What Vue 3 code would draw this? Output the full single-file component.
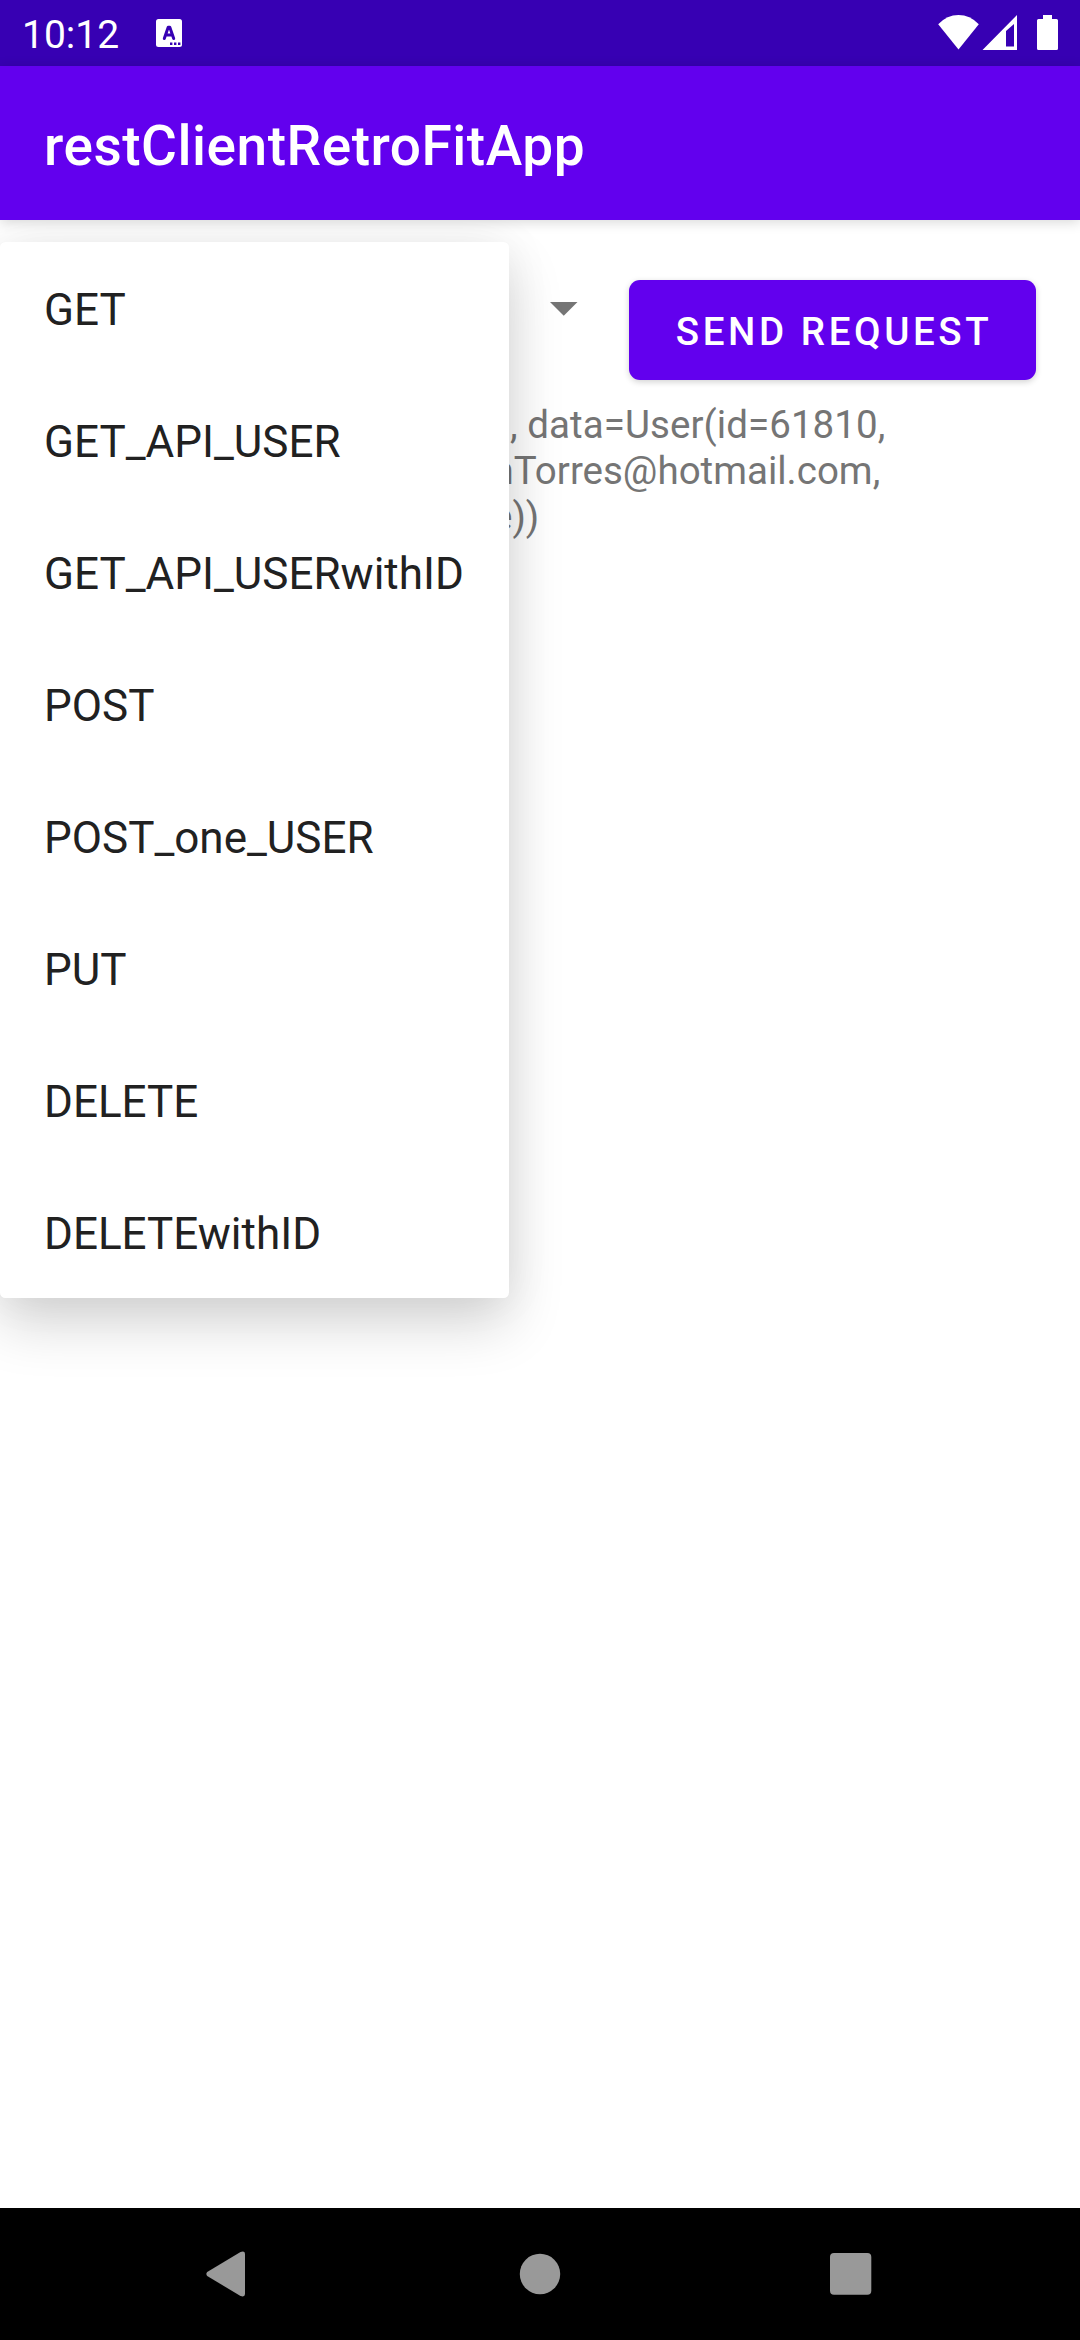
<script setup>
const methods = ['GET', 'GET_API_USER', 'GET_API_USERwithID', 'POST', 'POST_one_USER', 'PUT', 'DELETE', 'DELETEwithID']
</script>

<template>
  <div class="screen">
    <header class="status">
      <span class="clock">10:12</span>
      <svg class="ime" width="26" height="28" viewBox="0 0 26 28">
        <rect width="26" height="28" rx="2.5" fill="#fff" />
        <path d="M8.3 19.5 L12.2 8.2 H13.8 L17.7 19.5 M10 16h6" fill="none" stroke="#3700b3" stroke-width="3" stroke-linecap="round" stroke-linejoin="round" />
        <path d="M14 23.5h2.4v2.4H14zM18 23.5h2.4v2.4H18zM22 23.5h2.4v2.4H22z" fill="#3700b3" />
      </svg>
      <svg class="system" width="122" height="38" viewBox="0 0 122 38">
        <path d="M0.2 10.2Q9 1 20.5 1T40.8 10.2L20.5 35.5z" fill="#fff" />
        <path fill-rule="evenodd" d="M44.5 36L79 1V36zM68 17V32.5H76V10z" fill="#fff" />
        <path d="M105 1h9v4h4.5q1.500 0 1.500 1.500v28q0 1.500-1.500 1.500h-18q-1.500 0-1.500-1.500v-28q0-1.500 1.500-1.500h4.500z" fill="#fff" />
      </svg>
    </header>
    <div class="appbar"><h1>restClientRetroFitApp</h1></div>
    <main>
      <div class="controls">
        <svg class="caret" width="28" height="14" viewBox="0 0 28 14"><path d="M0 0H27.500L13.750 13.750z" fill="#757575" /></svg>
        <button>SEND REQUEST</button>
      </div>
      <div class="response">
        <p class="l1">, data=User(id=61810,</p>
        <p class="l2">nTorres@hotmail.com,</p>
        <p class="l3">e))</p>
      </div>
      <ul class="menu">
        <li v-for="m in methods" :key="m">{{ m }}</li>
      </ul>
    </main>
    <nav>
      <svg width="40" height="46" viewBox="0 0 40 46"><path d="M1.200 21Q-.5 23 1.200 25L34.500 45Q39 46.500 39 43V3Q39-.5 34.500 1z" fill="#999" /></svg>
      <svg class="home" width="42" height="42" viewBox="0 0 42 42"><circle cx="21" cy="21" r="20.200" fill="#999" /></svg>
      <svg width="42" height="42" viewBox="0 0 42 42"><rect width="41.300" height="41.700" rx="4" fill="#999" /></svg>
    </nav>
  </div>
</template>

<style>
body {
  margin: 0;
  overflow: hidden;
}
</style>

<style scoped>
.screen {
  width: 1080px;
  height: 2340px;
  display: flex;
  flex-direction: column;
  background: #fff;
  overflow: hidden;
  font-family: Roboto, sans-serif;
}
.status {
  height: 66px;
  flex: none;
  box-sizing: border-box;
  padding: 0 20px 0 22px;
  display: flex;
  background: #3700b3;
  color: #fff;
}
.clock {
  width: 96px;
  font-size: 39px;
  line-height: 70px;
}
.ime {
  margin: 19px 0 0 37.500px;
}
.system {
  margin: 14px 0 0 auto;
}
.appbar {
  height: 154px;
  flex: none;
  box-sizing: border-box;
  padding: 5px 44px 0;
  display: flex;
  align-items: center;
  background: #6200ee;
  color: #fff;
  box-shadow: 0 2px 12px rgba(0, 0, 0, 0.16);
  position: relative;
  z-index: 1;
}
h1 {
  margin: 0;
  font-size: 55px;
  font-weight: 500;
  letter-spacing: 0.520px;
}
main {
  flex: 1;
  position: relative;
}
.controls {
  display: flex;
  align-items: flex-start;
  justify-content: flex-end;
  padding: 60px 44px 0 0;
}
.caret {
  margin: 22px 51.500px 0 0;
}
button {
  width: 407px;
  height: 100px;
  box-sizing: border-box;
  padding: 2px 0 0 3px;
  border: 0;
  border-radius: 11px;
  background: #6200ee;
  color: #fff;
  font: 500 38.5px Roboto, sans-serif;
  letter-spacing: 3.600px;
  box-shadow: 0 2px 6px rgba(0, 0, 0, 0.18);
}
.response {
  padding-top: 22px;
  font-size: 38.5px;
  line-height: 46px;
  color: #757575;
}
p {
  margin: 0;
}
.l1 {
  padding-left: 510px;
  letter-spacing: 0.070px;
}
.l2 {
  padding-left: 492.5px;
}
.l3 {
  padding-left: 492px;
}
.menu {
  position: absolute;
  top: 22px;
  left: 0;
  width: 509px;
  margin: 0;
  padding: 0;
  list-style: none;
  background: #fff;
  border-radius: 5.500px;
  box-shadow: 0 26px 56px rgba(0, 0, 0, 0.165), 0 0 48px rgba(0, 0, 0, 0.06);
}
.menu li {
  height: 132px;
  box-sizing: border-box;
  padding: 4px 44px 0;
  display: flex;
  align-items: center;
  font-size: 44px;
  color: #212121;
}
nav {
  height: 132px;
  flex: none;
  box-sizing: border-box;
  padding: 0 208px 0 206px;
  display: flex;
  align-items: center;
  justify-content: space-between;
  background: #000;
}
.home {
  margin-left: 4px;
}
</style>
